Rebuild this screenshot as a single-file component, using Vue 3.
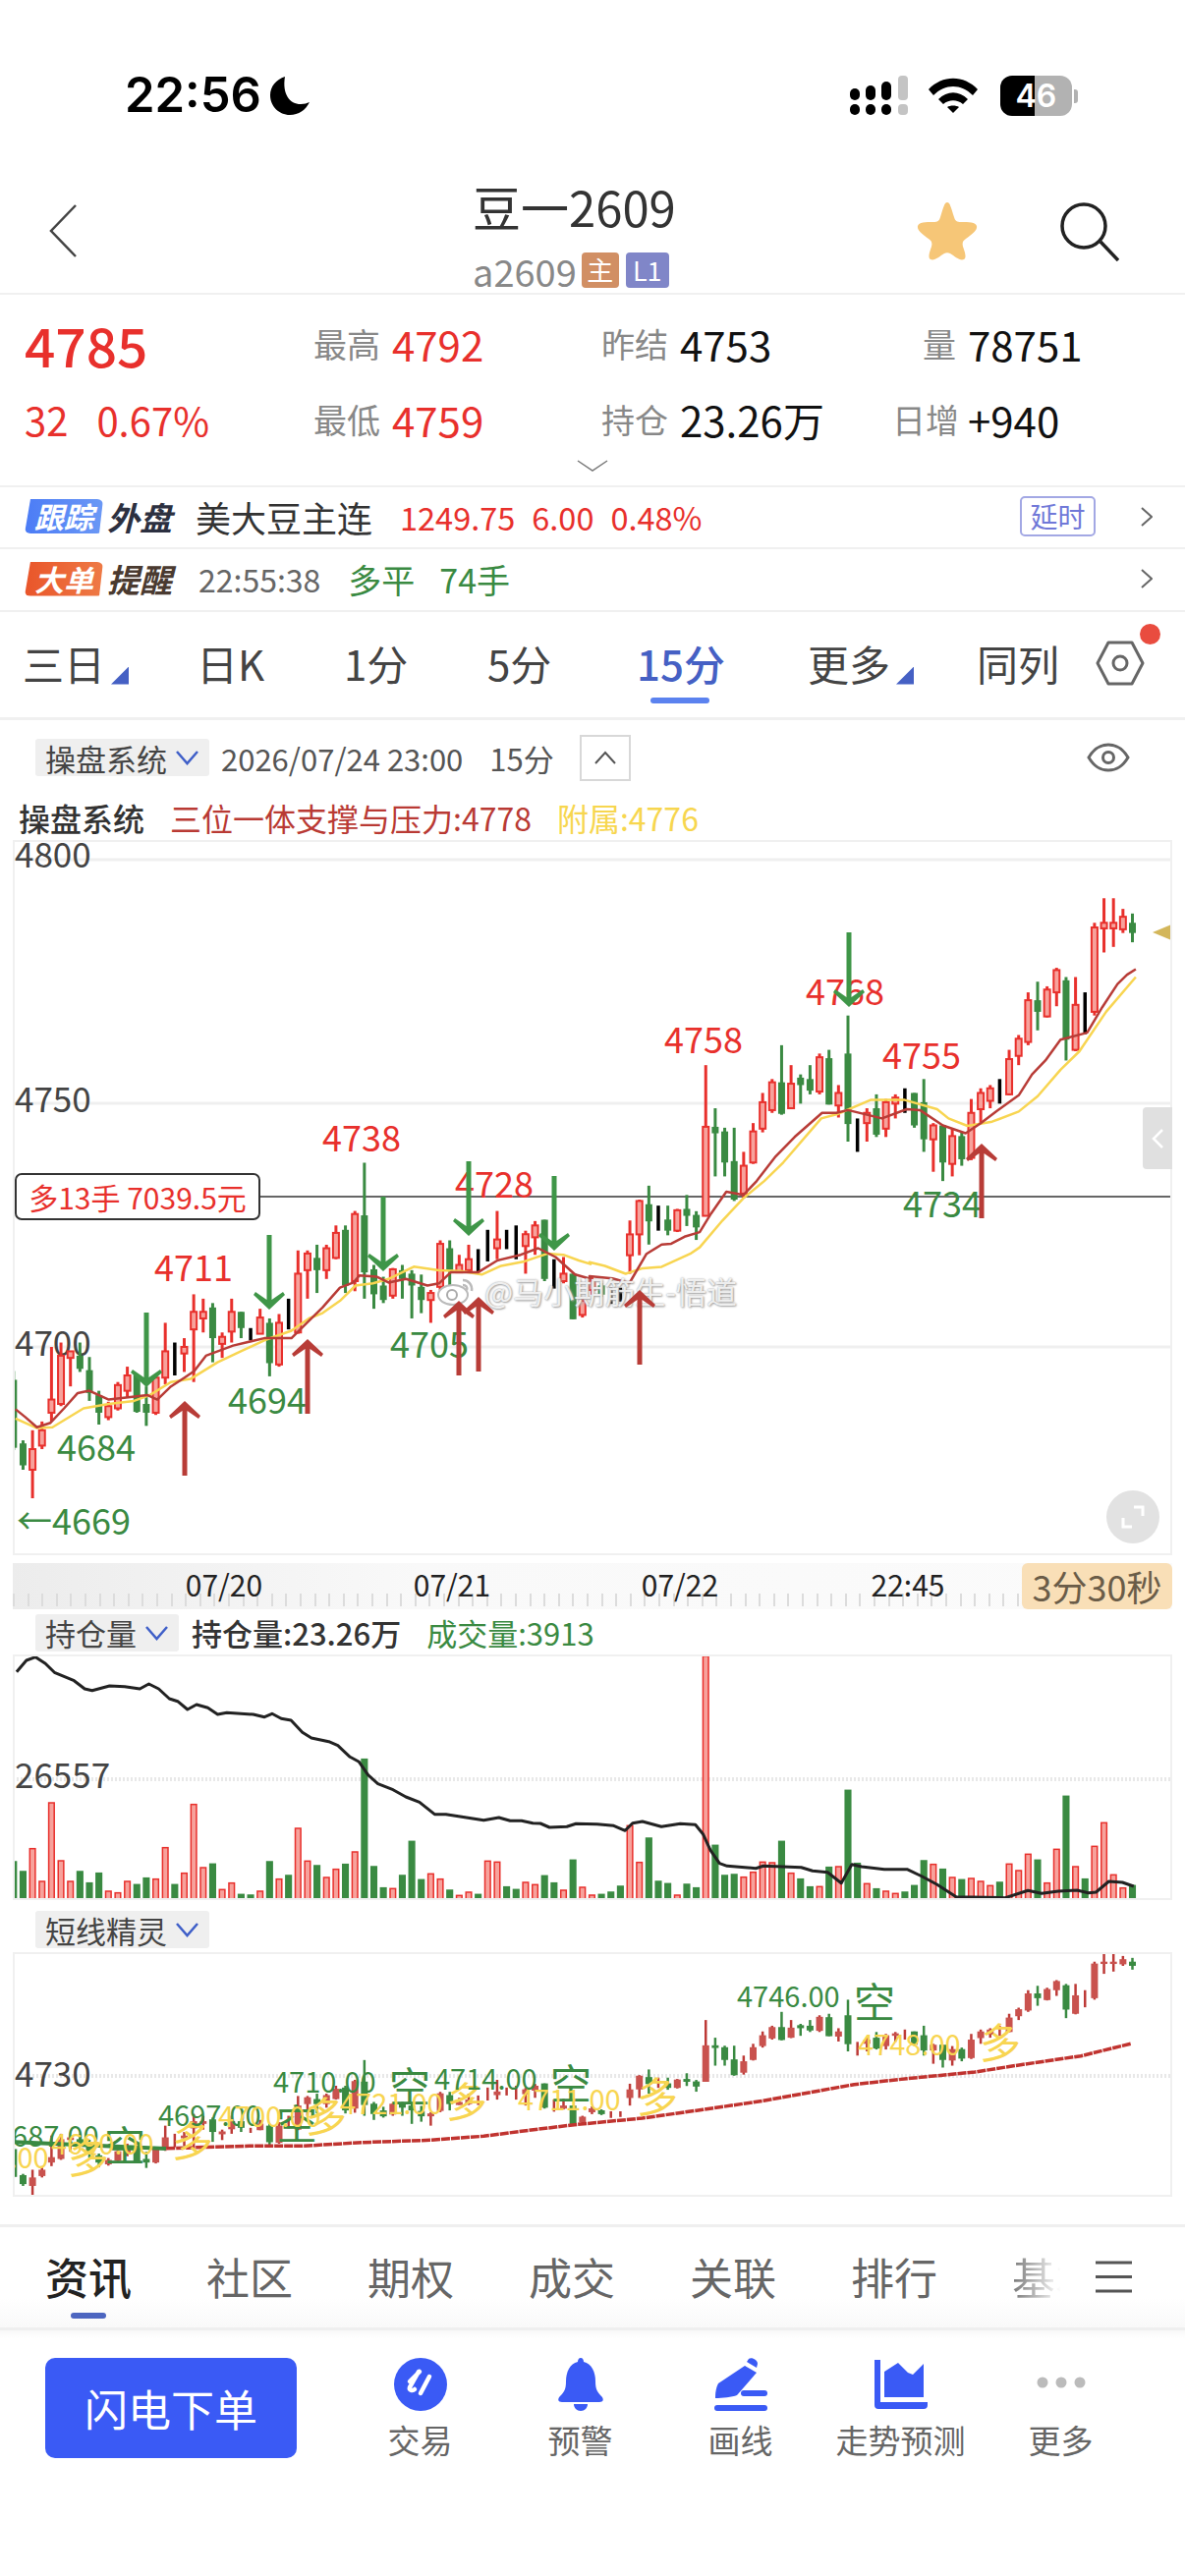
<script setup>
// price bars, measured from the chart: [type, high, low, bodyTop, bodyBottom]
const rawBarsLeft = [
  ['g',1110,1290,1130,1285],['g',1268,1335,1275,1325],['r',1245,1400,1288,1335],['r',1225,1288,1245,1280],
  ['r',1055,1225,1175,1205],['r',1045,1190,1075,1185],['r',1065,1145,1065,1080],['g',1045,1112,1075,1105],
  ['g',1078,1178,1108,1160],['g',1155,1232,1165,1205],['r',1180,1222,1190,1215],['r',1135,1200,1142,1195],
  ['r',1100,1170,1120,1155],['g',1120,1205,1120,1203],['g',1145,1235,1185,1205],['r',1120,1210,1125,1205],
  ['r',1000,1140,1065,1125],['b',1045,1120],['r',1035,1112,1055,1070],['r',935,1135,975,1015],
  ['r',945,1022,975,990],['g',955,1090,965,1035],['r',1022,1080,1032,1048],['r',945,1045,975,1020],
  ['g',975,1035,975,1012],['b',1012,1040],['r',968,1025,988,1025],['g',990,1122,1000,1092],
  ['r',980,1100,1000,1095],['b',945,1015],['r',835,1025,888,1022],['r',835,945,842,880],
  ['g',822,932,852,880],['r',822,900,830,880],['r',778,855,795,852],['g',778,932,788,915],
  ['r',745,928,752,905],['g',635,945,755,885],['g',868,968,878,935],['g',895,955,915,948],
  ['r',875,945,878,938],['g',868,945,880,900],['g',880,990,888,915],['g',890,978,918,948],
  ['r',925,1000,932,948],['r',812,925,820,918],['g',812,915,830,880],['r',845,885,868,885],
  ['r',822,885,855,880],['b',832,885],['b',788,860],['r',745,855,810,830],
  ['b',788,832],['b',778,855],['r',790,888,798,825],['r',768,845,778,805],
  ['g',765,905,765,900],['b',855,922],['r',850,910,888,905],['g',888,992,888,992],
  ['r',945,988,950,982]
]
const rawBarsRight = [
  ['r',930,970,940,960],['g',945,975,950,970],['b',955,990],['b',955,985],
  ['r',810,925,840,885],['r',765,885,768,840],['g',735,862,775,812],['b',778,832],
  ['g',778,842,808,832],['r',785,835,788,832],['g',755,822,785,800],['g',790,852,798,825],
  ['r',475,800,608,800],['g',568,715,608,622],['g',610,715,618,685],['g',610,768,682,765],
  ['r',662,762,692,752],['r',600,688,618,685],['r',535,620,555,612],['r',505,578,512,572],
  ['g',432,582,512,580],['r',475,570,515,568],['g',495,558,502,518],['g',475,538,505,530],
  ['r',450,538,458,532],['g',442,560,460,560],['r',518,588,535,562],['g',368,640,450,602],
  ['b',590,662],['r',568,640,578,600],['g',538,630,568,625],['r',548,630,555,612],
  ['r',538,590,545,558],['b',525,578],['g',535,610,535,605],['g',505,662,555,635],
  ['r',600,705,605,635],['g',605,725,605,685],['r',612,715,628,688],['g',620,692,628,678],
  ['r',548,680,578,675],['r',525,600,535,570],['r',518,568,525,552],['b',505,558],
  ['r',442,540,462,538],['r',410,475,418,455],['r',318,432,335,425],['g',295,400,335,360],
  ['r',305,372,312,370],['r',265,348,270,318],['g',285,465,292,420],['r',285,445,345,442],
  ['b',318,408],['r',168,368,178,360],['r',115,232,168,180],['r',115,220,168,180],
  ['r',138,190,155,182],['g',148,210,168,190]
]

const leftY = (v) => 900 + v / 2.24
const rightY = (v) => 860 + v / 2.119
const barX = (i) => 13.8 + 9.65 * i

const toBar = (raw, i, mapY) => ({
  x: barX(i),
  type: raw[0],
  high: mapY(raw[1]),
  low: mapY(raw[2]),
  top: raw[3] ? mapY(raw[3]) : 0,
  bottom: raw[4] ? mapY(raw[4]) : 0
})

const bars = [
  ...rawBarsLeft.map((b, i) => toBar(b, i, leftY)),
  ...rawBarsRight.map((b, i) => toBar(b, i + rawBarsLeft.length, rightY))
]

// the lower panel repeats the same prices on a tighter scale
const miniY = (y) => 1997 + (y - 940) * 0.41
const miniBars = bars.map((b) => ({
  ...b,
  high: miniY(b.high),
  low: miniY(b.low),
  top: miniY(b.top),
  bottom: miniY(b.bottom)
}))

const toPath = (pts) => 'M' + pts.map((p) => p[0].toFixed(1) + ' ' + p[1].toFixed(1)).join('L')

const leftPts = (list) => list.map(([x, y]) => [x / 2.529, leftY(y)])
const rightPts = (list) => list.map(([x, y]) => [600 + x / 2.587, rightY(y)])

const redLine = toPath([
  ...leftPts([[40,1197],[65,1215],[95,1238],[130,1228],[165,1195],[200,1160],[230,1155],[280,1175],[330,1170],[380,1165],[405,1175],[440,1145],[475,1125],[500,1110],[530,1075],[600,1052],[680,1035],[750,1035],[790,1000],[830,965],[875,920],[910,908],[925,892],[970,895],[1000,908],[1045,900],[1100,915],[1130,910],[1160,885],[1230,885],[1280,858],[1340,845],[1385,830],[1430,850],[1480,890],[1520,900]]),
  ...rightPts([[0,930],[60,935],[105,945],[150,882],[190,862],[215,860],[250,845],[290,835],[320,795],[360,748],[405,755],[440,725],[490,672],[540,630],[612,578],[650,578],[680,572],[770,590],[835,570],[870,572],[930,605],[990,622],[1030,600],[1070,575],[1130,540],[1165,495],[1200,465],[1240,420],[1310,405],[1350,350],[1390,300],[1415,280],[1438,268]])
])
const yellowLine = toPath([
  ...leftPts([[40,1218],[95,1240],[135,1238],[215,1195],[280,1185],[345,1178],[385,1165],[440,1135],[490,1128],[560,1090],[620,1065],[680,1040],[750,1018],[795,990],[830,978],[875,950],[915,915],[960,910],[1000,900],[1065,872],[1130,880],[1185,882],[1240,890],[1290,870],[1350,860],[1410,842],[1450,845],[1490,858],[1520,866]]),
  ...rightPts([[0,900],[40,908],[95,925],[140,913],[190,910],[265,882],[290,868],[350,810],[405,762],[460,725],[510,685],[610,590],[655,580],[740,550],[830,550],[915,570],[945,590],[995,606],[1060,597],[1130,575],[1180,542],[1240,485],[1290,445],[1360,360],[1438,285]])
])

const arrowDown = (x, y) =>
  `${x - 2.5},${y - 76} ${x + 2.5},${y - 76} ${x + 2.5},${y - 10} ${x + 14},${y - 18} ${x + 16},${y - 15} ${x},${y} ${x - 16},${y - 15} ${x - 14},${y - 18} ${x - 2.5},${y - 10}`
const arrowUp = (x, y) =>
  `${x - 2.5},${y + 76} ${x + 2.5},${y + 76} ${x + 2.5},${y + 10} ${x + 14},${y + 18} ${x + 16},${y + 15} ${x},${y} ${x - 16},${y + 15} ${x - 14},${y + 18} ${x - 2.5},${y + 10}`

const greenArrows = [[149,1412],[274,1333],[390,1294],[477,1258],[564,1273],[864,1025]].map(([x, y]) => arrowDown(x, y))
const redArrows = [[188,1426],[313,1363],[467,1324],[487,1320],[651,1313],[999,1164]].map(([x, y]) => arrowUp(x, y))

const priceMarks = [
  { t: '4711', x: 157, y: 1304, red: true },
  { t: '4738', x: 328, y: 1172, red: true },
  { t: '4728', x: 463, y: 1219, red: true },
  { t: '4758', x: 676, y: 1072, red: true },
  { t: '4768', x: 820, y: 1023, red: true },
  { t: '4755', x: 898, y: 1088, red: true },
  { t: '4684', x: 58, y: 1487 },
  { t: '4694', x: 232, y: 1439 },
  { t: '4705', x: 397, y: 1382 },
  { t: '4734', x: 919, y: 1239 },
  { t: '←4669', x: 17, y: 1562 }
]

const yLabels = [
  { t: '4800', y: 883, line: 875 },
  { t: '4750', y: 1132, line: 1123 },
  { t: '4700', y: 1380, line: 1371 }
]

// volume bars: [type, top in zoomed px], base at the panel floor
const volumes = [
  'g945','g975','r905','r1005','r765','r942','r1005','g975','g1010','g980','r1035','r1040','r1005','g1015','g995','r998','r902','g1015','r980','r770',
  'r963','g952','r1030','r1010','g1045','g1047','r1035','g945','r998','g987','r843','r943','g957','r993','r968','g953','r915','g632','g960','g1025',
  'r1027','g987','g883','g1000','r982','r998','g1032','r1048','r1038','g1045','r943','r946','g1022','g1030','r1008','r1015','g988','g1010','r1032','g940',
  'r1023','r1047','g1045','g1038','g1020','r835','r947','g873','g1005','g1012','r1047','g1014','g1025','r317','g895','g987','g984','r992','r977','r946',
  'r948','g883','r980','g998','g1022','r1021','g962','r960','g727','g950','r1012','g1028','r1035','r1042','g1038','g1018','g942','r953','g968','r993',
  'g1000','r996','r1005','r1018','g1008','r952','r972','r922','g940','r1010','r907','g745','r960','g998','r898','r826','r985','r1025','g1018'
].map((v, i) => {
  const top = 1580 + Number(v.slice(1)) / 3
  return { x: barX(i) - 2.8, y: top, h: 1934 - top, red: v[0] === 'r' }
})

const openInterest = toPath(
  [[22,365],[35,330],[47,320],[60,340],[72,367],[98,392],[112,417],[122,422],[145,408],[165,410],[185,417],[197,402],[210,417],[224,447],[235,455],[248,480],[260,465],[275,475],[288,495],[300,490],[335,495],[350,503],[360,493],[372,508],[385,513],[400,550],[412,567],[435,578],[447,590],[463,625],[475,640],[487,680],[500,707],[520,725],[537,747],[555,763],[575,800],[590,800],[640,818],[660,810],[675,820],[690,820],[705,827],[715,828],[727,840],[750,838],[762,829],[790,830],[812,835],[827,850],[837,827],[850,822],[875,838],[900,829],[920,832],[930,860],[940,910],[952,950],[962,958],[1000,965],[1010,958],[1060,962],[1075,973],[1095,977],[1113,1010],[1127,953],[1140,960],[1170,968],[1200,968],[1220,990],[1240,1015],[1265,1052],[1330,1055],[1360,1033],[1378,1042],[1400,1035],[1425,1032],[1440,1040],[1450,1038],[1467,1005],[1485,1008],[1500,1020]]
    .map(([x, y]) => [x / 1.3, 1580 + y / 3])
)

const miniLine = toPath(
  [[220,740],[330,733],[400,733],[480,722],[570,715],[640,703],[700,685],[760,668],[850,648],[930,622],[1010,595],[1130,545],[1200,527],[1290,507],[1350,485],[1430,458],[1497,420]]
    .map(([x, y]) => [x / 1.3, 1940 + y / 3])
)

const signals = [
  { t: '4687.00', x: -4, y: 2185, big: false, c: 'g' },
  { t: '空', x: 106, y: 2200, big: true, c: 'g' },
  { t: '4680.00', x: -55, y: 2207, big: false, c: 'y' },
  { t: '多', x: 69, y: 2212, big: true, c: 'y' },
  { t: '4690.00', x: 52, y: 2193, big: false, c: 'y' },
  { t: '多', x: 175, y: 2195, big: true, c: 'y' },
  { t: '4697.00', x: 161, y: 2164, big: false, c: 'g' },
  { t: '空', x: 281, y: 2178, big: true, c: 'g' },
  { t: '4700.00', x: 222, y: 2165, big: false, c: 'y' },
  { t: '多', x: 311, y: 2170, big: true, c: 'y' },
  { t: '4710.00', x: 278, y: 2130, big: false, c: 'g' },
  { t: '空', x: 396, y: 2140, big: true, c: 'g' },
  { t: '4721.00', x: 346, y: 2152, big: false, c: 'y' },
  { t: '多', x: 454, y: 2155, big: true, c: 'y' },
  { t: '4714.00', x: 442, y: 2127, big: false, c: 'g' },
  { t: '空', x: 560, y: 2137, big: true, c: 'g' },
  { t: '4711.00', x: 527, y: 2148, big: false, c: 'y' },
  { t: '多', x: 648, y: 2150, big: true, c: 'y' },
  { t: '4746.00', x: 750, y: 2043, big: false, c: 'g' },
  { t: '空', x: 869, y: 2054, big: true, c: 'g' },
  { t: '4748.00', x: 873, y: 2092, big: false, c: 'y' },
  { t: '多', x: 997, y: 2095, big: true, c: 'y' }
]

const periodTabs = [
  { label: '三日', corner: true },
  { label: '日K' },
  { label: '1分' },
  { label: '5分' },
  { label: '15分', active: true },
  { label: '更多', corner: true },
  { label: '同列' }
]
const infoTabs = ['资讯', '社区', '期权', '成交', '关联', '排行']
const axisDates = ['07/20', '07/21', '07/22', '22:45']
</script>

<template>
  <div class="screen">
    <!-- status bar -->
    <div class="status">
      <span class="clock">22:56</span>
      <svg class="moon" viewBox="0 0 40 40"><path d="M15 1C6 4 0 11 0 20c0 11 9 20 20 20 9 0 16-5 20-13-3 1-5 2-9 2C20 29 12 19 15 1z" fill="#000"/></svg>
      <svg class="signal" viewBox="0 0 60 42">
        <rect x="0" y="13" width="10" height="12" rx="5"/><rect x="0" y="29" width="10" height="11" rx="5"/>
        <rect x="16" y="10" width="10" height="15" rx="5"/><rect x="16" y="29" width="10" height="11" rx="5"/>
        <rect x="32" y="6" width="10" height="19" rx="5"/><rect x="32" y="29" width="10" height="11" rx="5"/>
        <rect x="49" y="0" width="10" height="25" rx="4" fill="#c4c4c4"/><rect x="49" y="29" width="10" height="11" rx="4" fill="#c4c4c4"/>
      </svg>
      <svg class="wifi" viewBox="0 0 50 36">
        <path d="M0 12C14 -3 36 -3 50 12l-5 6C33 6 17 6 5 18z"/>
        <path d="M10 22c9-9 21-9 30 0l-5 5c-6-5-14-5-20 0z"/>
        <path d="M19 30c3-2 9-2 12 0l-6 6z"/>
      </svg>
      <div class="battery">
        <div class="battery-body"><span>46</span></div>
        <i class="battery-nub"></i>
      </div>
    </div>

    <!-- nav -->
    <header class="nav">
      <div class="nav-left">
        <svg width="28" height="54" viewBox="0 0 28 54"><path d="M27 1L2 27l25 26" fill="none" stroke="#444" stroke-width="2.5"/></svg>
      </div>
      <div class="nav-title">
        <div class="name">豆一2609</div>
        <div class="code">
          <span>a2609</span>
          <b class="tag-main">主</b>
          <b class="tag-level">L1</b>
        </div>
      </div>
      <svg class="star" viewBox="0 0 62 60"><path d="M31 1c3 0 4 6 7 15 1 4 3 5 7 5 8 0 15 0 16 4 1 5-6 9-11 13-3 2-4 4-3 8 2 6 4 11 1 13-4 2-9-3-14-6-2-1-4-1-6 0-5 3-10 8-14 6-3-2-1-7 1-13 1-4 0-6-3-8C7 34 0 30 1 25c1-4 8-4 16-4 4 0 6-1 7-5 3-9 4-15 7-15z" fill="#f6c677"/></svg>
      <svg class="search" viewBox="0 0 60 60"><circle cx="24" cy="24" r="22" fill="none" stroke="#222" stroke-width="3.5"/><path d="M41 40l18 19" stroke="#222" stroke-width="3.5"/></svg>
    </header>

    <!-- quote -->
    <section class="quote">
      <div class="quote-grid">
        <div class="cell"><strong class="last">4785</strong></div>
        <div class="cell"><span class="label">最高</span><span class="val up">4792</span></div>
        <div class="cell"><span class="label">昨结</span><span class="val">4753</span></div>
        <div class="cell right"><span class="label">量</span><span class="val">78751</span></div>
        <div class="cell change"><span>32</span><span>0.67%</span></div>
        <div class="cell"><span class="label">最低</span><span class="val up">4759</span></div>
        <div class="cell"><span class="label">持仓</span><span class="val">23.26万</span></div>
        <div class="cell right"><span class="label">日增</span><span class="val">+940</span></div>
      </div>
      <svg class="more-down" width="32" height="12" viewBox="0 0 32 12"><path d="M1 1l15 10L31 1" fill="none" stroke="#777" stroke-width="1.5"/></svg>
    </section>

    <!-- outer market -->
    <div class="strip">
      <b class="pill pill-blue">跟踪</b>
      <b class="pill-word">外盘</b>
      <span class="strip-name">美大豆主连</span>
      <span class="strip-nums">
        <span>1249.75</span><span>6.00</span><span>0.48%</span>
      </span>
      <span class="delay">延时</span>
      <svg class="row-arrow" width="12" height="20" viewBox="0 0 12 20"><path d="M1 1l10 9-10 9" fill="none" stroke="#666" stroke-width="2"/></svg>
    </div>
    <div class="strip strip-last">
      <b class="pill pill-orange">大单</b>
      <b class="pill-word brown">提醒</b>
      <span class="strip-time">22:55:38</span>
      <span class="strip-deal">多平</span>
      <span class="strip-deal lots">74手</span>
      <svg class="row-arrow" width="12" height="20" viewBox="0 0 12 20"><path d="M1 1l10 9-10 9" fill="none" stroke="#666" stroke-width="2"/></svg>
    </div>

    <!-- period tabs -->
    <nav class="periods">
      <div
        v-for="tab in periodTabs"
        :key="tab.label"
        :class="['period', { active: tab.active }]"
      >
        {{ tab.label }}<i v-if="tab.corner" class="corner"></i>
      </div>
      <div class="gear">
        <svg width="50" height="46" viewBox="0 0 50 46"><path d="M2 23L13 2h24l11 21-11 21H13z" fill="none" stroke="#666" stroke-width="3" stroke-linejoin="round"/><circle cx="25" cy="23" r="7" fill="none" stroke="#666" stroke-width="3"/></svg>
        <i class="dot"></i>
      </div>
    </nav>

    <!-- chart toolbar -->
    <div class="toolbar">
      <div class="chip">
        操盘系统
        <svg width="25" height="16" viewBox="0 0 25 16"><path d="M2 2l10.500 12L23 2" fill="none" stroke="#3f5fc8" stroke-width="2.500"/></svg>
      </div>
      <span class="stamp">2026/07/24 23:00</span>
      <span class="stamp period-name">15分</span>
      <div class="collapse">
        <svg width="24" height="14" viewBox="0 0 24 14"><path d="M2 13L12 2l10 11" fill="none" stroke="#555" stroke-width="2"/></svg>
      </div>
      <svg class="eye" width="44" height="30" viewBox="0 0 44 30"><path d="M2 15C8 5 14 2 22 2s14 3 20 13c-6 10-12 13-20 13S8 25 2 15z" fill="none" stroke="#666" stroke-width="3"/><circle cx="22" cy="15" r="5.500" fill="none" stroke="#666" stroke-width="3"/></svg>
    </div>
    <div class="legend">
      <span class="legend-name">操盘系统</span>
      <span class="legend-red">三位一体支撑与压力:4778</span>
      <span class="legend-yellow">附属:4776</span>
    </div>

    <!-- main chart -->
    <div class="panel panel-main">
      <svg class="plot" width="1176" height="724" viewBox="15 857 1176 724">
        <line v-for="l in yLabels" :key="l.line" x1="13" x2="1193" :y1="l.line" :y2="l.line" stroke="#efefef" stroke-width="3"/>
        <text v-for="l in yLabels" :key="l.t" x="15" :y="l.y" class="axis-num">{{ l.t }}</text>
        <line x1="264" x2="1193" y1="1218" y2="1218" stroke="#333" stroke-width="1.500"/>
        <text
          v-for="m in priceMarks"
          :key="m.t"
          :x="m.x"
          :y="m.y"
          :fill="m.red ? '#e8302c' : '#3a8a42'"
          class="mark"
        >{{ m.t }}</text>
        <g v-for="b in bars" :key="b.x">
          <line :x1="b.x" :x2="b.x" :y1="b.high" :y2="b.low" :stroke="b.type === 'r' ? '#e8302c' : b.type === 'g' ? '#3a8a42' : '#000'" :stroke-width="b.type === 'b' ? 3.500 : 3"/>
          <rect
            v-if="b.type === 'r'"
            :x="b.x - 3"
            :y="b.top"
            width="6"
            :height="b.bottom - b.top"
            fill="#f7a29c"
            stroke="#e8302c"
            stroke-width="2"
          />
          <rect
            v-else-if="b.type === 'g'"
            :x="b.x - 3.500"
            :y="b.top"
            width="7"
            :height="b.bottom - b.top"
            fill="#3a8a42"
          />
        </g>
        <path :d="yellowLine" fill="none" stroke="#f8d551" stroke-width="2.500" stroke-linejoin="round"/>
        <path :d="redLine" fill="none" stroke="#b83c37" stroke-width="2.500" stroke-linejoin="round"/>
        <polygon v-for="p in greenArrows" :key="p" :points="p" fill="#3f9648"/>
        <polygon points="1173,949 1192,941 1192,957" fill="#d3b65a"/>
      </svg>
      <div class="position-tag">多13手 7039.5元</div>
      <div class="watermark">
        <svg width="40" height="30" viewBox="0 0 40 30">
          <ellipse cx="16" cy="19" rx="15" ry="10" fill="#fff" stroke="#bbb" stroke-width="2"/>
          <circle cx="15" cy="19" r="5" fill="none" stroke="#aaa" stroke-width="2"/>
          <path d="M26 4c5 0 10 4 9 11M26 9c3 0 5 2 4 5" fill="none" stroke="#bbb" stroke-width="2.500"/>
        </svg>
        <span>@马小期筋生-悟道</span>
      </div>
      <svg class="plot arrows-over" width="1176" height="724" viewBox="15 857 1176 724">
        <polygon v-for="p in redArrows" :key="p" :points="p" fill="#b83c37"/>
      </svg>
      <div class="side-handle">
        <svg width="14" height="22" viewBox="0 0 14 22"><path d="M12 2L3 11l9 9" fill="none" stroke="#fff" stroke-width="2.500"/></svg>
      </div>
      <div class="expand">
        <svg width="24" height="24" viewBox="0 0 24 24"><path d="M13 2h9v9M11 22H2v-9" fill="none" stroke="#fff" stroke-width="3"/></svg>
      </div>
    </div>

    <!-- date axis -->
    <div class="axis">
      <span v-for="d in axisDates" :key="d" class="axis-date">{{ d }}</span>
      <span class="countdown">3分30秒</span>
    </div>

    <!-- open interest -->
    <div class="panel-head">
      <div class="chip chip-small">
        持仓量
        <svg width="25" height="16" viewBox="0 0 25 16"><path d="M2 2l10.500 12L23 2" fill="none" stroke="#3f5fc8" stroke-width="2.500"/></svg>
      </div>
      <span class="oi">持仓量:23.26万</span>
      <span class="turnover">成交量:3913</span>
    </div>
    <div class="panel panel-volume">
      <svg class="plot" width="1176" height="246" viewBox="15 1686 1176 246">
        <line x1="13" x2="1193" y1="1811" y2="1811" stroke="#e8e8e8" stroke-width="4" stroke-dasharray="2 2"/>
        <text x="15" y="1820" class="axis-num">26557</text>
        <rect
          v-for="v in volumes"
          :key="v.x"
          :x="v.x"
          :y="v.y"
          width="5.600"
          :height="v.h"
          :fill="v.red ? '#f7a29c' : '#3a8a42'"
          :stroke="v.red ? '#e8302c' : '#3a8a42'"
          stroke-width="1.500"
        />
        <path :d="openInterest" fill="none" stroke="#222" stroke-width="3" stroke-linejoin="round"/>
      </svg>
    </div>

    <!-- short term signals -->
    <div class="panel-head panel-head-mini">
      <div class="chip">
        短线精灵
        <svg width="25" height="16" viewBox="0 0 25 16"><path d="M2 2l10.500 12L23 2" fill="none" stroke="#3f5fc8" stroke-width="2.500"/></svg>
      </div>
    </div>
    <div class="panel panel-mini">
      <svg class="plot" width="1176" height="245" viewBox="15 1989 1176 245">
        <line x1="13" x2="1193" y1="2113" y2="2113" stroke="#e8e8e8" stroke-width="4" stroke-dasharray="2 2"/>
        <text x="15" y="2124" class="axis-num">4730</text>
        <g v-for="b in miniBars" :key="b.x">
          <line :x1="b.x" :x2="b.x" :y1="b.high" :y2="b.low" :stroke="b.type === 'g' ? '#3a8a42' : '#bd3a37'" stroke-width="2.500"/>
          <rect
            v-if="b.type !== 'b'"
            :x="b.x - 3.500"
            :y="b.top"
            width="7"
            :height="b.bottom - b.top"
            :fill="b.type === 'g' ? '#3a8a42' : '#c9524e'"
          />
        </g>
        <line x1="12" x2="169" y1="2180" y2="2187" stroke="#3a8a42" stroke-width="4"/>
        <path :d="miniLine" fill="none" stroke="#c0332f" stroke-width="3.500" stroke-linejoin="round" stroke-dasharray="9 1"/>
        <text
          v-for="s in signals"
          :key="s.t + s.x"
          :x="s.x"
          :y="s.y"
          :fill="s.c === 'g' ? '#3a8a42' : '#f8d551'"
          :class="s.big ? 'signal-word' : 'signal-num'"
        >{{ s.t }}</text>
      </svg>
    </div>

    <!-- info tabs -->
    <nav class="info-tabs">
      <div
        v-for="(tab, idx) in infoTabs"
        :key="tab"
        :class="['info-tab', { active: idx === 0 }]"
      >
        <span>{{ tab }}</span>
        <i v-if="idx === 0"></i>
      </div>
      <div class="info-tab fade"><span>基本</span></div>
      <svg class="menu" width="37" height="33" viewBox="0 0 37 33"><path d="M0 2h37M0 16.500h37M0 31h37" stroke="#555" stroke-width="3"/></svg>
    </nav>

    <!-- action bar -->
    <footer class="actions">
      <button class="flash">闪电下单</button>
      <div class="action">
        <svg width="54" height="54" viewBox="0 0 54 54">
          <circle cx="27" cy="27" r="27" fill="#3a5af5"/>
          <path d="M25 14l-9 16c-1 3 3 4 5 2M36 19l-9 17M16 24l10-10" fill="none" stroke="#fff" stroke-width="4.500" stroke-linecap="round"/>
        </svg>
        <span>交易</span>
      </div>
      <div class="action">
        <svg width="48" height="54" viewBox="0 0 48 54">
          <path d="M24 0c2 0 3 2 3 4 8 2 12 10 12 20 0 8 2 11 6 15 3 3 2 6-2 6H5c-4 0-5-3-2-6 4-4 6-7 6-15C9 14 13 6 21 4c0-2 1-4 3-4z" fill="#3a5af5"/>
          <path d="M17 47h14c0 4-3 7-7 7s-7-3-7-7z" fill="#3a5af5"/>
        </svg>
        <span>预警</span>
      </div>
      <div class="action">
        <svg width="54" height="54" viewBox="0 0 54 54">
          <path d="M31 8l12 7-20 23c-5 2-15 3-22 3 0-7 1-11 3-15z" fill="#3a5af5"/>
          <path d="M33 4l2-3c3-2 9 1 9 5l-1 4z" fill="#3a5af5"/>
          <rect x="27" y="33" width="27" height="6" rx="3" fill="#3a5af5"/>
          <rect x="0" y="48" width="54" height="6" rx="3" fill="#3a5af5"/>
        </svg>
        <span>画线</span>
      </div>
      <div class="action">
        <svg width="54" height="50" viewBox="0 0 54 50">
          <path d="M0 0h6v43h48v3a4 4 0 0 1-4 4H4a4 4 0 0 1-4-4z" fill="#3a5af5"/>
          <path d="M10 38V12L24 3l10 10 5 2 11-11v34z" fill="#3a5af5"/>
        </svg>
        <span>走势预测</span>
      </div>
      <div class="action">
        <svg width="50" height="54" viewBox="0 0 50 54">
          <circle cx="6" cy="25" r="5.500" fill="#bbb"/><circle cx="25" cy="25" r="5.500" fill="#bbb"/><circle cx="44" cy="25" r="5.500" fill="#bbb"/>
        </svg>
        <span>更多</span>
      </div>
    </footer>
  </div>
</template>

<style scoped>
.screen {
  width: 1206px;
  height: 2622px;
  overflow: hidden;
  background: #fff;
  color: #333;
  font-family: "Noto Sans CJK SC", "Noto Sans", sans-serif;
}

.status {
  height: 165px;
  padding-left: 127px;
  display: flex;
  align-items: flex-start;
  box-sizing: border-box;
}

.clock {
  margin-top: 72px;
  font-family: Inter, sans-serif;
  font-size: 49px;
  line-height: 50px;
  font-weight: 600;
  color: #000;
}

.moon {
  width: 40px;
  height: 40px;
  margin: 77px 0 0 9px;
}

.signal {
  width: 60px;
  height: 42px;
  margin: 77px 0 0 550px;
}

.wifi {
  width: 50px;
  height: 36px;
  margin: 79px 0 0 20px;
}

.battery {
  margin: 77px 0 0 23px;
  display: flex;
  align-items: center;
}

.battery-body {
  width: 73px;
  height: 41px;
  border-radius: 12px;
  background: linear-gradient(90deg, #000 0 48%, #b2b2b2 48% 100%);
  display: flex;
  align-items: center;
  justify-content: center;
  font-family: Inter, sans-serif;
  font-size: 32px;
  font-weight: 600;
  color: #fff;
}

.battery-nub {
  width: 4px;
  height: 14px;
  margin-left: 2px;
  background: #b2b2b2;
  border-radius: 0 3px 3px 0;
}

.nav {
  height: 135px;
  display: flex;
  align-items: flex-start;
  box-sizing: border-box;
  border-bottom: 2px solid #f0f0f0;
}

.nav-left {
  width: 481px;
  padding: 43px 0 0 50px;
  box-sizing: border-box;
}

.nav-title {
  width: 206px;
  padding-top: 20px;
}

.name {
  font-size: 49px;
  line-height: 50px;
  color: #333;
  white-space: nowrap;
}

.code {
  margin-top: 22px;
  height: 36px;
  display: flex;
  align-items: center;
  font-size: 38px;
  color: #888;
}

.code b {
  height: 36px;
  line-height: 36px;
  border-radius: 4px;
  text-align: center;
  color: #fff;
  font-size: 27px;
  font-weight: 400;
  flex: none;
}

.tag-main {
  width: 38px;
  margin-left: 5px;
  background: #d18f64;
}

.tag-level {
  width: 44px;
  margin-left: 7px;
  background: #8086c8;
}

.star {
  width: 62px;
  height: 60px;
  margin: 40px 0 0 246px;
}

.search {
  width: 60px;
  height: 60px;
  margin: 41px 0 0 84px;
}

.quote {
  height: 196px;
  padding: 11px 0 0 25px;
  box-sizing: border-box;
  border-bottom: 2px solid #f0f0f0;
}

.quote-grid {
  display: grid;
  grid-template-columns: 294px 293px 296px 1fr;
  grid-auto-rows: 77px;
}

.cell {
  display: flex;
  align-items: center;
  gap: 12px;
  white-space: nowrap;
}

.label {
  font-size: 34px;
  color: #888;
}

.val {
  font-size: 42px;
  color: #111;
}

.val.up,
.last,
.change {
  color: #e8302c;
}

.last {
  font-size: 55px;
  font-weight: 500;
}

.change {
  gap: 29px;
  font-size: 40px;
}

.right .label {
  width: 65px;
  text-align: right;
}

.more-down {
  display: block;
  margin: 3px 0 0 562px;
}

.strip {
  height: 63px;
  padding: 0 0 2px 25px;
  display: flex;
  align-items: center;
  box-sizing: border-box;
  border-bottom: 2px solid #f0f0f0;
}

.strip-last {
  height: 64px;
}

.pill {
  width: 80px;
  height: 35px;
  line-height: 35px;
  text-align: center;
  color: #fff;
  font-size: 30px;
  font-style: italic;
  border-radius: 6px;
  clip-path: polygon(6px 0, 100% 0, calc(100% - 4px) 100%, 0 100%);
}

.pill-blue {
  background: linear-gradient(90deg, #4b7cf6, #6b98f5);
}

.pill-orange {
  background: linear-gradient(90deg, #e9552a, #ee7a45);
}

.pill-word {
  margin-left: 4px;
  font-size: 33px;
  font-style: italic;
  color: #2c3040;
}

.pill-word.brown {
  color: #4a3a30;
}

.strip-name {
  margin-left: 24px;
  font-size: 36px;
  color: #333;
}

.strip-nums {
  margin-left: 28px;
  display: flex;
  gap: 17px;
  font-size: 32.500px;
  color: #e8302c;
}

.delay {
  width: 77px;
  height: 41px;
  line-height: 37px;
  margin-left: auto;
  box-sizing: border-box;
  text-align: center;
  font-size: 28px;
  color: #7078d8;
  border: 2px solid #a3a8e4;
  border-radius: 5px;
}

.row-arrow {
  margin: 0 33px 0 46px;
}

.strip-last .row-arrow {
  margin-left: auto;
}

.strip-time {
  margin-left: 27px;
  font-size: 32px;
  color: #666;
}

.strip-deal {
  margin-left: 28px;
  font-size: 34px;
  color: #3a8a42;
}

.lots {
  margin-left: 25px;
}

.periods {
  height: 110px;
  padding: 0 0 4px 23px;
  display: grid;
  grid-template-columns: 177px 150px 146px 152px 174px 172px 121px auto;
  align-items: center;
  box-sizing: border-box;
  border-bottom: 3px solid #f0f0f0;
  font-size: 42px;
  color: #444;
}

.period {
  position: relative;
  display: flex;
  align-items: center;
  white-space: nowrap;
}

.period.active {
  color: #4560c4;
  font-weight: 500;
}

.period.active::after {
  content: "";
  position: absolute;
  left: 14px;
  top: 66px;
  width: 60px;
  height: 6px;
  border-radius: 3px;
  background: #5b82ef;
}

.corner {
  width: 18px;
  height: 18px;
  margin: 26px 0 0 6px;
  background: #4560c4;
  clip-path: polygon(100% 0, 100% 100%, 0 100%);
}

.gear {
  position: relative;
  height: 46px;
}

.gear svg {
  display: block;
}

.dot {
  position: absolute;
  left: 45px;
  top: -17px;
  width: 21px;
  height: 21px;
  border-radius: 50%;
  background: #e94c3f;
}

.toolbar {
  height: 76px;
  padding-left: 36px;
  display: flex;
  align-items: center;
}

.chip {
  width: 177px;
  height: 38px;
  padding-left: 10px;
  box-sizing: border-box;
  display: flex;
  align-items: center;
  gap: 8px;
  background: #efefef;
  border-radius: 3px;
  font-size: 31px;
  color: #444;
  white-space: nowrap;
}

.chip-small {
  width: 146px;
}

.stamp {
  margin-left: 12px;
  font-size: 31px;
  color: #555;
  white-space: nowrap;
}

.period-name {
  margin-left: 27px;
}

.collapse {
  width: 52px;
  height: 47px;
  margin-left: 26px;
  box-sizing: border-box;
  display: flex;
  align-items: center;
  justify-content: center;
  border: 2px solid #d8d8d8;
}

.eye {
  margin: 0 56px 0 auto;
}

.legend {
  height: 46px;
  padding-left: 19px;
  display: flex;
  align-items: center;
  font-size: 32px;
  white-space: nowrap;
}

.legend-name {
  color: #333;
  font-weight: 500;
}

.legend-red {
  margin-left: 26px;
  color: #b93a34;
}

.legend-yellow {
  margin-left: 26px;
  color: #f7d64f;
}

.panel {
  position: relative;
  width: 1180px;
  margin-left: 13px;
  box-sizing: border-box;
  border: 2px solid #f0f0f0;
}

.plot {
  display: block;
}

.axis-num {
  font-size: 35px;
  fill: #444;
}

.mark {
  font-size: 36px;
}

.signal-num {
  font-size: 29px;
}

.signal-word {
  font-size: 42px;
}

.arrows-over {
  position: absolute;
  left: 0;
  top: 0;
}

.position-tag {
  position: absolute;
  left: 0;
  top: 337px;
  width: 250px;
  height: 48px;
  line-height: 44px;
  box-sizing: border-box;
  border: 2px solid #333;
  border-radius: 7px;
  background: #fff;
  text-align: center;
  font-size: 30px;
  color: #e8302c;
  white-space: nowrap;
}

.watermark {
  position: absolute;
  left: 430px;
  top: 434px;
  display: flex;
  align-items: center;
  gap: 8px;
  font-size: 31px;
  color: rgba(255, 255, 255, 0.82);
  white-space: nowrap;
  text-shadow: 0 0 2px #999, 1px 1px 2px #aaa;
}

.side-handle {
  position: absolute;
  right: -2px;
  top: 270px;
  width: 30px;
  height: 63px;
  display: flex;
  align-items: center;
  justify-content: center;
  background: #e0e0e0;
  border-radius: 4px 0 0 4px;
}

.expand {
  position: absolute;
  left: 1111px;
  top: 660px;
  width: 54px;
  height: 54px;
  display: flex;
  align-items: center;
  justify-content: center;
  border-radius: 50%;
  background: #e2e2e2;
}

.axis {
  width: 1180px;
  height: 47px;
  margin: 8px 0 0 13px;
  padding-left: 99px;
  box-sizing: border-box;
  display: flex;
  background:
    repeating-linear-gradient(90deg, #dcdcdc 0 2px, transparent 2px 14.600px) 0 calc(100% - 3px) / 100% 13px no-repeat,
    linear-gradient(90deg, #ececec, #f9f9f9 35%, #fbfbfb);
}

.axis-date {
  width: 232px;
  text-align: center;
  font-size: 30px;
  line-height: 43px;
  color: #222;
}

.countdown {
  width: 153px;
  background: #f9dfb7;
  border-radius: 6px;
  text-align: center;
  font-size: 36px;
  line-height: 47px;
  color: #6a5c48;
  white-space: nowrap;
}

.panel-head {
  height: 39px;
  margin: 4px 0 3px 36px;
  display: flex;
  align-items: center;
  font-size: 31px;
  white-space: nowrap;
}

.oi {
  margin-left: 13px;
  color: #333;
  font-weight: 500;
}

.turnover {
  margin-left: 26px;
  color: #3a8a42;
}

.panel-volume {
  height: 250px;
}

.panel-head-mini {
  margin: 11px 0 4px 36px;
  height: 38px;
}

.panel-mini {
  height: 249px;
}

.info-tabs {
  margin-top: 28px;
  height: 108px;
  padding: 24px 0 0 46px;
  box-sizing: border-box;
  display: grid;
  grid-template-columns: repeat(6, 164px) 85px 37px;
  background: linear-gradient(#fff 70%, #f9f9f9);
  border-top: 3px solid #efefef;
  border-bottom: 3px solid #efefef;
}

.info-tab {
  font-size: 44px;
  line-height: 52px;
  color: #666;
  white-space: nowrap;
}

.info-tab span {
  display: block;
}

.info-tab.active {
  color: #222;
  font-weight: 500;
}

.info-tab i {
  display: block;
  width: 36px;
  height: 6px;
  margin: 11px 0 0 26px;
  border-radius: 3px;
  background: #4d66c0;
}

.fade span {
  width: 62px;
  overflow: hidden;
  color: transparent;
  background: linear-gradient(90deg, #777, #fff 80%);
  -webkit-background-clip: text;
  background-clip: text;
}

.menu {
  margin-top: 10px;
}

.actions {
  padding: 28px 0 0 46px;
  display: grid;
  grid-template-columns: 300px repeat(5, 163px);
  background: linear-gradient(#f8f8f8, #fff 8px);
}

.flash {
  width: 256px;
  height: 102px;
  border: none;
  border-radius: 10px;
  background: #3a5af5;
  color: #fff;
  font-family: inherit;
  font-size: 44px;
  padding: 0;
}

.action {
  display: flex;
  flex-direction: column;
  align-items: center;
  font-size: 33px;
  color: #666;
  white-space: nowrap;
}

.action svg {
  height: 54px;
}

.action span {
  margin-top: 5px;
  line-height: 48px;
}
</style>

<style>
html,
body {
  margin: 0;
  background: #fff;
}
</style>
